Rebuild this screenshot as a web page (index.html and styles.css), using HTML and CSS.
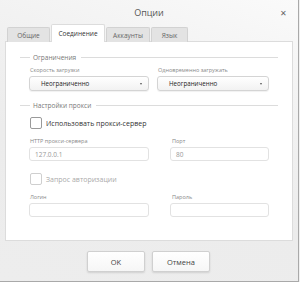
FILE: index.html
```html
<!DOCTYPE html>
<html lang="ru">

<head>
    <meta charset="UTF-8" />
    <title>Опции</title>
    <link rel="stylesheet" href="styles.css">
</head>

<body>
    <div class="window">
        <!-- Заголовок -->
        <div class="titlebar">
            <span class="title">Опции</span>
            <span class="close">&#x2715;</span>
        </div>

        <!-- Вкладки -->
        <div class="tabs">
            <div class="tab tab-general">Общие</div>
            <div class="tab tab-conn active">Соединение</div>
            <div class="tab tab-acc">Аккаунты</div>
            <div class="tab tab-lang">Язык</div>
        </div>

        <div class="panel">
            <div class="legend">Ограничения</div>

            <div class="row limits">
                <div class="field field-speed">
                    <div class="label">Скорость загрузки</div>
                    <div class="select">Неограниченно<span class="arrow"></span></div>
                </div>
                <div class="field field-count">
                    <div class="label">Одновременно загружать</div>
                    <div class="select">Неограниченно<span class="arrow"></span></div>
                </div>
            </div>

            <div class="legend">Настройки прокси</div>

            <label class="check">
                <span class="box"></span>
                Использовать прокси-сервер
            </label>

            <div class="row proxy">
                <div class="field field-host">
                    <div class="label">HTTP прокси-сервера</div>
                    <div class="input">127.0.0.1</div>
                </div>
                <div class="field field-port">
                    <div class="label">Порт</div>
                    <div class="input">80</div>
                </div>
            </div>

            <label class="check disabled">
                <span class="box"></span>
                Запрос авторизации
            </label>

            <div class="row proxy">
                <div class="field field-host">
                    <div class="label">Логин</div>
                    <div class="input"></div>
                </div>
                <div class="field field-port">
                    <div class="label">Пароль</div>
                    <div class="input"></div>
                </div>
            </div>
        </div>

        <div class="buttons">
            <button class="btn">OK</button>
            <button class="btn">Отмена</button>
        </div>
    </div>
</body>

</html>
```

FILE: styles.css
```css
* {
    box-sizing: border-box;
}

body {
    margin: 0;
    padding: 0;
    background: #f0f0f0;
    font-family: "Open Sans", "Noto Sans", sans-serif;
}

.window {
    width: 299px;
    height: 282px;
    display: flex;
    flex-direction: column;
    border-right: 1px solid #a9a9a9;
    border-bottom: 1px solid #a9a9a9;
    background: linear-gradient(200deg, #fafafa 0%, #f2f2f2 30%, #ececec 60%, #ededed 100%);
}

.titlebar {
    height: 25px;
    display: flex;
    align-items: center;
    justify-content: center;
    position: relative;
}

.title {
    font-size: 9px;
    color: #555;
}

.close {
    position: absolute;
    right: 11px;
    top: 7px;
    font-size: 8px;
    color: #666;
}

.tabs {
    height: 17px;
    display: flex;
    align-items: flex-end;
    padding-left: 7px;
    gap: 1px;
    position: relative;
    z-index: 1;
    margin-bottom: -1px;
}

.tab {
    height: 15px;
    display: flex;
    align-items: center;
    justify-content: center;
    font-size: 6.5px;
    color: #666;
    background: #e3e3e3;
    border: 1px solid #d2d2d2;
    border-bottom: none;
    border-radius: 2px 2px 0 0;
}

.tab.active {
    height: 18px;
    background: #fff;
    color: #333;
    border-color: #dcdcdc;
}

.tab-general { width: 43px; }
.tab-conn { width: 54px; }
.tab-acc { width: 44px; }
.tab-lang { width: 37px; }

.panel {
    margin: 0 5px;
    height: 200px;
    background: #fff;
    border: 1px solid #dcdcdc;
    padding: 10px 14px 0 14px;
}

.legend {
    display: flex;
    align-items: center;
    font-size: 6.5px;
    color: #777;
    height: 10px;
}

.legend::before {
    content: "";
    width: 10px;
    height: 1px;
    background: #dcdcdc;
    margin-right: 3px;
}

.legend::after {
    content: "";
    flex: 1;
    height: 1px;
    background: #dcdcdc;
    margin-left: 5px;
}

.row {
    display: flex;
    padding-left: 9px;
}

.limits {
    gap: 8px;
    margin-top: 4px;
    margin-bottom: 9px;
}

.proxy {
    gap: 21px;
}

.label {
    font-size: 5.5px;
    color: #888;
    height: 8px;
    margin-bottom: 2px;
    padding-left: 1px;
}

.field-speed,
.field-host { width: 120px; }
.field-count { width: 112px; }
.field-port { width: 99px; }
.field-port .label { padding-left: 2px; }

.select {
    height: 15px;
    display: flex;
    align-items: center;
    padding-left: 11px;
    position: relative;
    font-size: 6.2px;
    font-weight: 500;
    color: #222;
    border: 1px solid #d4d4d4;
    border-radius: 3px;
    background: linear-gradient(#fff, #f2f2f2);
    box-shadow: 0 1px 1px rgba(0, 0, 0, 0.06);
}

.arrow {
    position: absolute;
    right: 6px;
    top: 6px;
    width: 0;
    height: 0;
    border-left: 1.5px solid transparent;
    border-right: 1.5px solid transparent;
    border-top: 2px solid #555;
}

.input {
    height: 14px;
    display: flex;
    align-items: center;
    padding-left: 5px;
    font-size: 6.5px;
    color: #999;
    border: 1px solid #e2e2e2;
    border-radius: 3px;
}

.check {
    display: flex;
    align-items: center;
    gap: 4px;
    padding-left: 10px;
    margin: 7px 0 8px;
    font-size: 7px;
    color: #333;
}

.box {
    width: 12px;
    height: 12px;
    border: 1px solid #9a9a9a;
    border-radius: 2px;
    background: #fff;
}

.check.disabled {
    color: #aaa;
    margin: 12px 0 8px;
}

.check.disabled .box {
    border-color: #cfcfcf;
}

.buttons {
    display: flex;
    justify-content: center;
    gap: 7px;
    padding-top: 10px;
    padding-right: 1px;
}

.btn {
    width: 58px;
    height: 21px;
    font-family: inherit;
    font-size: 7.5px;
    font-weight: normal;
    color: #444;
    border: 1px solid #d0d0d0;
    border-radius: 2px;
    background: linear-gradient(#fff, #f6f6f6);
    box-shadow: 0 1px 2px rgba(0, 0, 0, 0.12);
}
```
